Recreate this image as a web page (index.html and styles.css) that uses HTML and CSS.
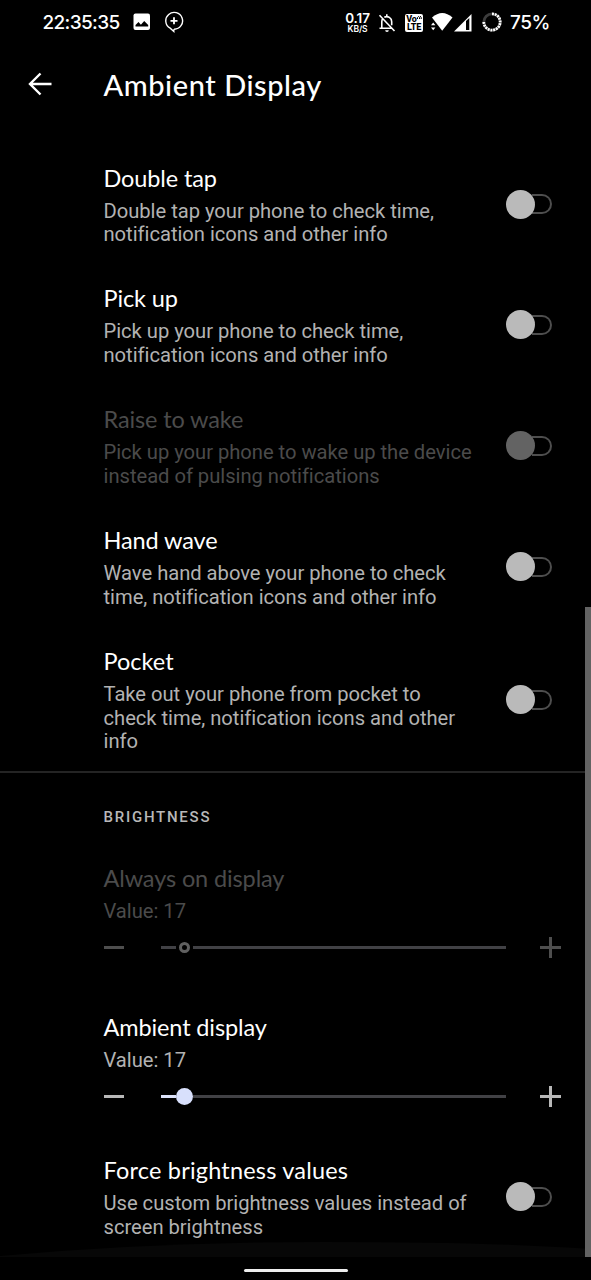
FILE: index.html
```html
<!DOCTYPE html>
<html lang="en">
<head>
<meta charset="utf-8">
<title>Ambient Display</title>
<link rel="stylesheet" href="styles.css">
</head>
<body>
<div class="screen">
  <header class="status">
    <span class="clock">22:35:35</span>
    <svg class="ic-photo" width="18" height="18" viewBox="0 0 18 18"><rect x="0.500" y="0.500" width="16.500" height="16.500" rx="2" fill="#fff"/><path d="M2.500 13.500V12L5.500 9l2.400 2.800L11.200 8l4 4v1.500z" fill="#000"/></svg>
    <svg class="ic-pin" width="20" height="22" viewBox="0 0 20 22" fill="none" stroke="#fff"><path d="M10 18.200A8.400 8.400 0 1 0 6.200 17.200L9.800 20.400V18.200" stroke-width="1.400"/><path d="M10 6.300v7M6.500 9.800h7" stroke-width="1.800"/></svg>
    <div class="speed"><span class="rate">0.17</span><span class="unit">KB/S</span></div>
    <svg class="ic-bell" width="18" height="20" viewBox="0 0 18 20" fill="none" stroke="#fff" stroke-width="1.600"><path d="M1.500 2.200 16.500 18M1.500 15.200h12M3.800 15V8.800c0-1.500.4-2.700 1.200-3.600M6.300 4.200C9.900 2.500 13.700 4.900 13.700 8.700v3.500M8.800 3.500V1.200"/><path d="M7.200 17.200h3.600a1.800 1.800 0 0 1-3.600 0z" fill="#fff" stroke="none"/></svg>
    <div class="volte"><span class="vo">Vo<svg width="5" height="6" viewBox="0 0 5 6" fill="none" stroke="#000" stroke-width="1"><path d="M0.500 4V2.500l1-1 1 1V4M3 1l1.200 1.500V4"/></svg></span><span class="lte">LTE</span></div>
    <svg class="ic-wifi" width="22" height="20" viewBox="0 0 22 20" fill="#fff"><path d="M1 5.500Q11.200-3.500 21.500 5.500L11.200 18.800z"/><path d="M0 13.300 2.200 10.500l2.200 2.800zM0 15.500l2.200 2.800 2.200-2.800z"/></svg>
    <svg class="ic-signal" width="18" height="18" viewBox="0 0 18 18" fill="#fff"><path d="M0 17.500 17.500 0v17.500zM12 7V16h3.300V4z" fill-rule="evenodd"/></svg>
    <svg class="ic-battery" width="20" height="20" viewBox="0 0 20 20" fill="none" stroke-width="2.800"><circle cx="10" cy="10" r="8.200" stroke="#3c3c3c"/><path d="M10 1.800A8.200 8.200 0 1 1 1.800 10" stroke="#fff" stroke-dasharray="2 .8"/></svg>
    <span class="percent">75%</span>
  </header>

  <div class="appbar">
    <svg class="back" width="24" height="24" viewBox="0 0 24 24" fill="none" stroke="#fff" stroke-width="2.400"><path d="M12.500 1.500 2 12l10.500 10.500M2 12h21.500"/></svg>
    <h1 class="heading">Ambient Display</h1>
  </div>

  <main class="list">
    <section class="row">
      <div class="copy"><h2 class="title t-double">Double tap</h2><p class="summary">Double tap your phone to check time,<br>notification icons and other info</p></div>
      <span class="switch"></span>
    </section>
    <section class="row">
      <div class="copy"><h2 class="title t-pick">Pick up</h2><p class="summary">Pick up your phone to check time,<br>notification icons and other info</p></div>
      <span class="switch"></span>
    </section>
    <section class="row disabled">
      <div class="copy"><h2 class="title t-raise">Raise to wake</h2><p class="summary">Pick up your phone to wake up the device<br>instead of pulsing notifications</p></div>
      <span class="switch"></span>
    </section>
    <section class="row">
      <div class="copy"><h2 class="title t-hand">Hand wave</h2><p class="summary">Wave hand above your phone to check<br>time, notification icons and other info</p></div>
      <span class="switch"></span>
    </section>
    <section class="row tall">
      <div class="copy"><h2 class="title t-pocket">Pocket</h2><p class="summary">Take out your phone from pocket to<br>check time, notification icons and other<br>info</p></div>
      <span class="switch"></span>
    </section>
    <h3 class="category">BRIGHTNESS</h3>
    <section class="level disabled">
      <h2 class="title t-always">Always on display</h2>
      <p class="summary">Value: 17</p>
      <div class="control"><span class="minus"></span><div class="slider"><span class="filled"></span><span class="ring"></span><span class="rest"></span></div><span class="plus"></span></div>
    </section>
    <section class="level last">
      <h2 class="title t-ambient">Ambient display</h2>
      <p class="summary">Value: 17</p>
      <div class="control"><span class="minus"></span><div class="slider"><span class="filled"></span><span class="thumb"></span><span class="rest"></span></div><span class="plus"></span></div>
    </section>
    <section class="row">
      <div class="copy"><h2 class="title t-force">Force brightness values</h2><p class="summary">Use custom brightness values instead of<br>screen brightness</p></div>
      <span class="switch"></span>
    </section>
  </main>
  <svg class="glow" width="591" height="16" viewBox="0 0 591 16"><path d="M0 15Q155 1 325 1T591 8V16H0z" fill="#070707"/></svg>
  <span class="scrollbar"></span>
  <footer class="nav"><span class="handle"></span></footer>
</div>
</body>
</html>
```
FILE: styles.css
```css
*, *::before, *::after { box-sizing: border-box; }
body { margin: 0; background: #000; color: #fff; font-family: Roboto, "Liberation Sans", sans-serif; }
h1, h2, h3, p { margin: 0; font-weight: 400; }
svg { display: block; flex: none; }
.screen { position: relative; width: 591px; height: 1280px; overflow: hidden; background: #000; display: flex; flex-direction: column; }

.status { height: 45px; padding-left: 42.500px; display: flex; align-items: center; flex: none; white-space: nowrap; }
.clock { width: 77.500px; font: 500 19px/44px Inter, sans-serif; letter-spacing: -.65px; }
.ic-photo { margin-left: 13px; margin-bottom: 1px; }
.ic-pin { margin-left: 13px; margin-bottom: 1px; }
.speed { width: 27px; margin-left: 160px; display: flex; flex-direction: column; align-items: center; font-family: Inter, sans-serif; font-weight: 600; }
.rate { font-size: 13.500px; line-height: 13px; letter-spacing: -.1px; }
.unit { font-size: 8.500px; line-height: 8px; letter-spacing: -.1px; }
.ic-bell { margin-left: 7px; }
.volte { width: 18px; height: 18px; margin-left: 9px; border-radius: 2px; background: #fff; color: #000; font: 800 9px/8px Roboto, sans-serif; display: flex; flex-direction: column; align-items: center; justify-content: center; letter-spacing: -.2px; }
.vo { display: flex; }
.ic-wifi { margin-left: 8px; margin-bottom: 1px; }
.ic-signal { margin-left: 1px; }
.ic-battery { margin-left: 10px; margin-bottom: 1px; }
.percent { margin-left: 8px; font: 500 19px/44px Inter, sans-serif; letter-spacing: -.4px; }

.appbar { height: 99.500px; padding-left: 28px; display: flex; align-items: flex-start; flex: none; }
.back { margin-top: 27px; }
.heading { margin-left: 51.500px; padding-top: 22px; font: 500 29px/36px Lato, sans-serif; letter-spacing: .55px; white-space: nowrap; }

.list { flex: 1; }
.row { height: 120.900px; padding: 18px 39.500px 0 103.500px; display: flex; justify-content: space-between; }
.row .switch { margin-top: 27px; }
.tall { height: 145.400px; border-bottom: 2px solid #242424; }
.row.tall .switch { margin-top: 39px; }
.copy { width: 390px; white-space: nowrap; }
.title { font: 400 23.500px/30px Lato, sans-serif; letter-spacing: -.12px; white-space: nowrap; }
.t-pocket { letter-spacing: 0; }
.t-force { letter-spacing: .2px; }
.summary { margin-top: 7px; font-size: 20.200px; line-height: 23.650px; color: #b2b2b2; letter-spacing: -.03px; white-space: nowrap; }
.disabled .title, .disabled .summary { color: #4b4b4b; }

.switch { width: 46px; height: 29px; display: flex; align-items: center; flex: none; }
.switch::before { content: ""; width: 29px; height: 29px; border-radius: 50%; background: #bababa; flex: none; z-index: 1; }
.switch::after { content: ""; width: 20px; height: 20px; margin-left: -3px; border: 2.500px solid #4e4e4e; border-left: 0; border-radius: 0 10px 10px 0; flex: none; }
.disabled .switch::before { background: #636363; }

.category { height: 90px; padding: 34px 0 0 103.500px; font: 500 15px/20px Roboto, sans-serif; letter-spacing: 1.750px; color: #b8b8b8; }
.level { height: 149px; padding-left: 103.500px; --tint: #b8b8b8; }
.level.disabled { --tint: #4e4e4e; }
.level.last { height: 125px; }
.control { display: flex; align-items: center; height: 30px; margin-top: 8px; }
.minus { width: 20px; height: 3px; background: var(--tint); }
.slider { width: 345px; margin-left: 37px; display: flex; align-items: center; }
.filled { width: 15px; height: 3px; background: #dce2fa; }
.disabled .filled { background: #414145; }
.thumb { width: 17px; height: 17px; border-radius: 50%; background: #d8e0fc; }
.ring { width: 11px; height: 11px; margin: 0 3px; border: 3px solid #606060; border-radius: 50%; }
.rest { flex: 1; height: 3px; background: #414145; }
.plus { width: 21px; height: 21px; margin-left: 34px; background: linear-gradient(var(--tint), var(--tint)) center / 21px 3px no-repeat, linear-gradient(var(--tint), var(--tint)) center / 3px 21px no-repeat; }

.glow { position: absolute; left: 0; top: 1241px; }
.scrollbar { position: absolute; right: 0; top: 607px; width: 6px; height: 650px; background: #636363; }
.nav { height: 23px; display: flex; justify-content: center; align-items: center; flex: none; }
.handle { width: 104px; height: 3px; margin-top: 2px; border-radius: 2px; background: #eee; }
```
